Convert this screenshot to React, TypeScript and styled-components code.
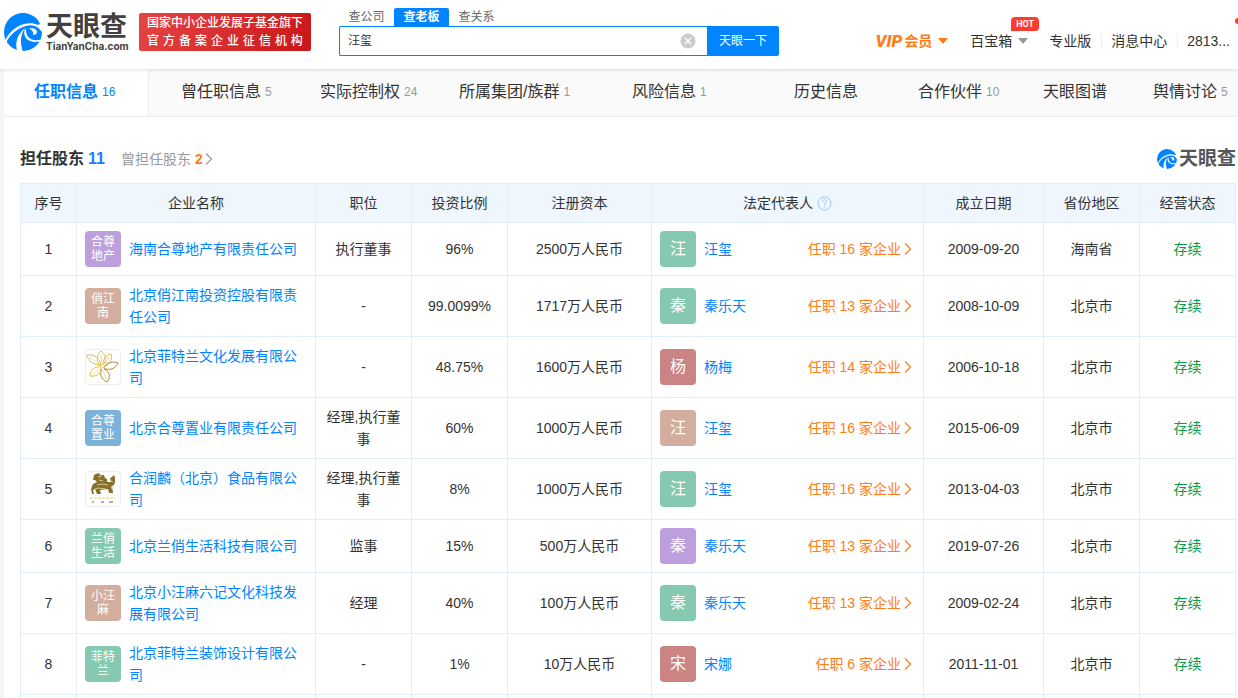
import React from 'react';
import styled, { createGlobalStyle } from 'styled-components';

const Global = createGlobalStyle`
  * { box-sizing: border-box; }
  html { scrollbar-width: none; }
  body {
    margin: 0;
    background: #f5f5f5;
    color: #333;
    font: 14px/22px "Liberation Sans", "Noto Sans CJK SC", sans-serif;
  }
  a { color: inherit; text-decoration: none; }
  button, input { font: inherit; }
`;

const Header = styled.header`
  display: flex;
  align-items: flex-start;
  height: 69px;
  padding-left: 4px;
  background: #fff;
  box-shadow: 0 1px 4px rgba(0, 0, 0, 0.12);
  position: relative;
  z-index: 1;
`;

const Brand = styled.a`
  display: flex;
  gap: 4px;
  width: 124px;
  margin-top: 13px;
`;

const BrandWords = styled.span`
  display: flex;
  flex-direction: column;
  color: #443f40;
  white-space: nowrap;
`;

const BrandName = styled.span<{ $small?: boolean }>`
  font-size: ${p => (p.$small ? 19 : 27)}px;
  line-height: ${p => (p.$small ? 20 : 28)}px;
  font-weight: 700;
  color: ${p => (p.$small ? '#55565c' : '#443f40')};
`;

const BrandDomain = styled.span`
  font: 700 10px/10px Inter, sans-serif;
`;

const Slogan = styled.div`
  width: 172px;
  height: 38px;
  margin: 13px 0 0 11px;
  padding: 1px 8px;
  border-radius: 2px;
  background: linear-gradient(115deg, #e64545, #c91618);
  color: #fff;
  font-size: 12px;
  line-height: 18px;
  font-weight: 500;
  white-space: nowrap;
`;

const SloganLine = styled.div`
  display: flex;
  justify-content: space-between;
`;

const Search = styled.form`
  width: 440px;
  margin: 8px 0 0 28px;
`;

const SearchTabs = styled.div`
  display: flex;
  height: 18px;
`;

const SearchTab = styled.button<{ $active?: boolean }>`
  width: 55px;
  padding: 0;
  border: 0;
  border-radius: 2px 2px 0 0;
  background: ${p => (p.$active ? '#0084ff' : 'transparent')};
  color: ${p => (p.$active ? '#fff' : '#666')};
  font-size: 12px;
  line-height: 18px;
  font-weight: ${p => (p.$active ? 700 : 400)};
`;

const SearchRow = styled.div`
  display: flex;
  height: 30px;
`;

const SearchBox = styled.div`
  flex: 1;
  display: flex;
  align-items: center;
  padding: 0 11px 0 8px;
  border: 1px solid #0084ff;
  border-right: 0;
  border-radius: 2px 0 0 2px;
`;

const SearchInput = styled.input`
  flex: 1;
  min-width: 0;
  padding: 0;
  border: 0;
  outline: 0;
  background: none;
  color: #333;
  font-size: 12px;
`;

const IconButton = styled.button`
  display: flex;
  padding: 0;
  border: 0;
  background: none;
`;

const SearchButton = styled.button`
  width: 72px;
  padding: 0;
  border: 0;
  border-radius: 0 2px 2px 0;
  background: #0084ff;
  color: #fff;
  font-size: 12px;
`;

const UserNav = styled.nav`
  display: flex;
  align-items: center;
  margin: 30px 8px 0 auto;
  white-space: nowrap;
`;

const UserLink = styled.a<{ $vip?: boolean; $menu?: boolean }>`
  display: flex;
  align-items: center;
  gap: 6px;
  position: relative;
  padding: 0 ${p => (p.$menu ? 11 : 10)}px;
  color: ${p => (p.$vip ? '#ff7d18' : '#333')};
  font-weight: ${p => (p.$vip ? 700 : 400)};
  & + &::before {
    content: '';
    position: absolute;
    left: 0;
    top: 4px;
    height: 14px;
    border-left: 1px solid #eee;
  }
  &:last-child { padding-right: 0; }
`;

const VipMark = styled.span`
  font: italic 900 17px/22px Roboto, sans-serif;
  margin-right: -4px;
`;

const Caret = styled.span`
  border: 5px solid transparent;
  border-top: 6px solid currentColor;
  border-bottom: 0;
`;

const GreyCaret = styled(Caret)`
  color: #999;
`;

const Hot = styled.span`
  position: absolute;
  right: 0;
  top: -13px;
  width: 28px;
  height: 14px;
  border-radius: 4px 4px 4px 0;
  background: #ff3b30;
  color: #fff;
  font: 700 9px/14px Roboto, sans-serif;
  text-align: center;
`;

const Dot = styled.span`
  position: absolute;
  right: -11px;
  top: -12px;
  width: 6px;
  height: 6px;
  border-radius: 50%;
  background: #ff3b30;
`;

const Page = styled.main`
  margin-left: 4px;
  background: #fff;
  overflow: hidden;
`;

const TabBar = styled.nav`
  display: grid;
  grid-template-columns: 145fr 139fr 139fr 173fr 162fr 124fr 125fr 110fr 117fr;
  height: 48px;
  border-bottom: 1px solid #eee;
  background: #fafafa;
`;

const Tab = styled.a<{ $active?: boolean }>`
  display: flex;
  align-items: center;
  gap: 4px;
  padding: 0 0 1px ${p => (p.$active ? 30 : 32)}px;
  white-space: nowrap;
  font-size: 16px;
  color: ${p => (p.$active ? '#0084ff' : '#333')};
  font-weight: ${p => (p.$active ? 700 : 400)};
  background: ${p => (p.$active ? '#fff' : 'transparent')};
  border-right: ${p => (p.$active ? '1px solid #eee' : '0')};
`;

const TabCount = styled.span<{ $active?: boolean }>`
  font-size: 12px;
  font-weight: 400;
  color: ${p => (p.$active ? '#0084ff' : '#999')};
`;

const Section = styled.section`
  padding: 31px 2px 0 16px;
`;

const SectionHead = styled.div`
  display: flex;
  align-items: center;
  height: 22px;
  margin-bottom: 13px;
`;

const Title = styled.h2`
  display: flex;
  gap: 4px;
  margin: 0 16px 0 0;
  font-size: 16px;
  line-height: 22px;
  font-weight: 700;
`;

const TitleCount = styled.span`
  color: #1a7dff;
`;

const Former = styled.a`
  display: flex;
  align-items: center;
  color: #999;
`;

const FormerCount = styled.b`
  margin: 0 2px 0 4px;
  color: #ff7d18;
`;

const SmallBrand = styled.div`
  display: flex;
  align-items: center;
  gap: 2px;
  margin-left: auto;
`;

const Table = styled.table`
  width: 100%;
  table-layout: fixed;
  border-collapse: collapse;
`;

const Head = styled.th`
  height: 39px;
  padding: 0;
  border: 1px solid #e1edf7;
  background: #eff6fd;
  font-weight: 400;
`;

const HeadLabel = styled.span`
  display: flex;
  align-items: center;
  justify-content: center;
  gap: 4px;
`;

const Cell = styled.td`
  padding: 8px;
  border: 1px solid #e1edf7;
  text-align: center;
`;

const StatusCell = styled(Cell)`
  color: #0a9a4a;
`;

const Party = styled.div`
  display: flex;
  align-items: center;
  gap: 8px;
  text-align: left;
`;

const Avatar = styled.span<{ $color: string; $person?: boolean }>`
  flex: none;
  display: flex;
  align-items: center;
  justify-content: center;
  width: 36px;
  height: 36px;
  padding: 0 6px;
  border-radius: 4px;
  background: ${p => p.$color};
  color: #fff;
  font-size: ${p => (p.$person ? 16 : 12)}px;
  line-height: ${p => (p.$person ? 22 : 14)}px;
  text-align: center;
`;

const Picture = styled.svg`
  flex: none;
  width: 36px;
  height: 36px;
  border: 1px solid #eee;
  border-radius: 4px;
`;

const NameLink = styled.a`
  color: #0084ff;
`;

const JobsLink = styled.a`
  display: flex;
  align-items: center;
  gap: 3px;
  margin: 0 3px 0 auto;
  color: #ff7d18;
`;

const SwirlSvg = styled.svg`
  flex: none;
`;

const Chevron = () => (
  <svg width="8" height="14" viewBox="0 0 8 14" fill="none" stroke="currentColor" strokeWidth="1.2" aria-hidden="true">
    <path d="M1 1.5 6.5 7 1 12.5" />
  </svg>
);

const Swirl = ({ size }: { size: number }) => (
  <SwirlSvg width={size} height={size} viewBox="0 0 38 38" aria-hidden="true">
    <circle cx="19" cy="19" r="19" fill="#0084ff" />
    <g fill="#fff">
      <path d="M1 28C5 19 12 13 20 11c6-1.500 10-1 14 1L37 10l2 2v7l-2-1c-3-5-9-7-15-5C14 15 6 21 2 30Z" />
      <path d="M13 38c-2-9 0-16 8-23-5 8-5 15-2 24Z" />
      <path d="M22 16C21.500 24 27 29 37 26.500L36 28.500c-11 2-17-3-15.500-11.500Z" />
      <path d="M25 15.500c4-1 8 .5 8 3.500 0 2-2 3-4 3 1-3-1-5-4-6.500Z" />
    </g>
  </SwirlSvg>
);

const Flower = () => (
  <Picture viewBox="0 0 34 34" fill="none" stroke="#dfc04c" strokeWidth="1" role="img" aria-label="logo">
    <path d="M15 16C9 11 11 4 15 1c5 4 6 9 2 14" />
    <path d="M14 15C6 15 1 9 1 5c7-1 13 3 14 10" />
    <path d="M17 14c0-5 3-9 8-10 2 5-1 9-6 12" />
    <path d="M18 17c4-5 9-6 14-4-3 6-9 8-14 5" stroke="#b5883c" />
    <path d="M18 19c6 3 7 8 3 13-6-3-8-8-5-13" stroke="#b5883c" />
    <path d="M15 18c0 6-5 9-11 8 0-6 5-10 11-9" />
    <path d="M14 16C10 12 6 9 3 7M16 14 15 4M19 14l4-7M17 21l3 8M14 19l-8 6M14 13l3 5 5-3-3-3-3 5 5 2" strokeWidth="0.5" />
  </Picture>
);

const Beast = () => (
  <Picture viewBox="0 0 34 34" fill="#85702e" role="img" aria-label="logo">
    <path d="m10 2 3-1 1 2h4l1 3 2 1 0 3h4l-1-4 2-1 2-2 1 2v5l-1 3-2 1 1 7h-4l-1-4-8 1 1 4h-4l-2-5-2 1 1 4H6l-1-5 2-5 4-2-2-2h-2l1-5Z" />
    <path d="m12 5 4-1m-3 4 4 1m-6 4 6-1 5 1m-10 3 8 1m5-8 2 1m-2 4 1 3m-17 0 3-1" fill="none" stroke="#d8c783" strokeWidth="1" />
    <path d="M4 26h25" stroke="#ece6c0" strokeWidth="2" strokeDasharray="3 1" />
    <path d="M6 30h2m7 0h3m5 0h4" stroke="#d8a0a4" strokeWidth="2" />
  </Picture>
);

const GREEN = '#85cab0';
const BROWN = '#d3ae9e';
const RED = '#cb8383';
const PURPLE = '#bc9fdc';
const BLUE = '#7cb2d9';

const tabs: [string, string][] = [
  ['任职信息', '16'], ['曾任职信息', '5'], ['实际控制权', '24'], ['所属集团/族群', '1'],
  ['风险信息', '1'], ['历史信息', ''], ['合作伙伴', '10'], ['天眼图谱', ''], ['舆情讨论', '5'],
];

const columns: [string, number][] = [
  ['序号', 56], ['企业名称', 239], ['职位', 96], ['投资比例', 96], ['注册资本', 144],
  ['法定代表人', 272], ['成立日期', 120], ['省份地区', 96], ['经营状态', 96],
];

interface Company {
  name: string;
  logo: React.ReactNode;
  job: string;
  share: string;
  capital: string;
  person: string;
  color: string;
  jobs: number;
  date: string;
  area: string;
}

const companies: Company[] = [
  { name: '海南合尊地产有限责任公司', logo: <Avatar $color={PURPLE}>合尊地产</Avatar>, job: '执行董事', share: '96%', capital: '2500万人民币', person: '汪玺', color: GREEN, jobs: 16, date: '2009-09-20', area: '海南省' },
  { name: '北京俏江南投资控股有限责任公司', logo: <Avatar $color={BROWN}>俏江南</Avatar>, job: '-', share: '99.0099%', capital: '1717万人民币', person: '秦乐天', color: GREEN, jobs: 13, date: '2008-10-09', area: '北京市' },
  { name: '北京菲特兰文化发展有限公司', logo: <Flower />, job: '-', share: '48.75%', capital: '1600万人民币', person: '杨梅', color: RED, jobs: 14, date: '2006-10-18', area: '北京市' },
  { name: '北京合尊置业有限责任公司', logo: <Avatar $color={BLUE}>合尊置业</Avatar>, job: '经理,执行董事', share: '60%', capital: '1000万人民币', person: '汪玺', color: BROWN, jobs: 16, date: '2015-06-09', area: '北京市' },
  { name: '合润麟（北京）食品有限公司', logo: <Beast />, job: '经理,执行董事', share: '8%', capital: '1000万人民币', person: '汪玺', color: GREEN, jobs: 16, date: '2013-04-03', area: '北京市' },
  { name: '北京兰俏生活科技有限公司', logo: <Avatar $color={GREEN}>兰俏生活</Avatar>, job: '监事', share: '15%', capital: '500万人民币', person: '秦乐天', color: PURPLE, jobs: 13, date: '2019-07-26', area: '北京市' },
  { name: '北京小汪麻六记文化科技发展有限公司', logo: <Avatar $color={BROWN}>小汪麻</Avatar>, job: '经理', share: '40%', capital: '100万人民币', person: '秦乐天', color: GREEN, jobs: 13, date: '2009-02-24', area: '北京市' },
  { name: '北京菲特兰装饰设计有限公司', logo: <Avatar $color={GREEN}>菲特兰</Avatar>, job: '-', share: '1%', capital: '10万人民币', person: '宋娜', color: RED, jobs: 6, date: '2011-11-01', area: '北京市' },
];

export default function App() {
  return (
    <>
      <Global />
      <Header>
        <Brand href="#">
          <Swirl size={38} />
          <BrandWords>
            <BrandName>天眼查</BrandName>
            <BrandDomain>TianYanCha.com</BrandDomain>
          </BrandWords>
        </Brand>
        <Slogan>
          <SloganLine>国家中小企业发展子基金旗下</SloganLine>
          <SloganLine>{[...'官方备案企业征信机构'].map(c => <span key={c}>{c}</span>)}</SloganLine>
        </Slogan>
        <Search onSubmit={e => e.preventDefault()}>
          <SearchTabs>
            <SearchTab type="button">查公司</SearchTab>
            <SearchTab type="button" $active>查老板</SearchTab>
            <SearchTab type="button">查关系</SearchTab>
          </SearchTabs>
          <SearchRow>
            <SearchBox>
              <SearchInput aria-label="搜索" defaultValue="汪玺" />
              <IconButton type="reset" aria-label="清除">
                <svg width="16" height="16" viewBox="0 0 16 16">
                  <circle cx="8" cy="8" r="7.500" fill="#ccc" />
                  <path d="m5 5 6 6m0-6-6 6" stroke="#fff" strokeWidth="1.500" />
                </svg>
              </IconButton>
            </SearchBox>
            <SearchButton type="submit">天眼一下</SearchButton>
          </SearchRow>
        </Search>
        <UserNav>
          <UserLink href="#" $vip $menu><VipMark>VIP</VipMark>会员<Caret /></UserLink>
          <UserLink href="#" $menu>百宝箱<GreyCaret /><Hot>HOT</Hot></UserLink>
          <UserLink href="#">专业版</UserLink>
          <UserLink href="#">消息中心</UserLink>
          <UserLink href="#">2813...<Dot /></UserLink>
        </UserNav>
      </Header>
      <Page>
        <TabBar>
          {tabs.map(([label, count], i) => (
            <Tab key={label} href="#" $active={i === 0}>
              {label}
              {count && <TabCount $active={i === 0}>{count}</TabCount>}
            </Tab>
          ))}
        </TabBar>
        <Section>
          <SectionHead>
            <Title>担任股东<TitleCount>11</TitleCount></Title>
            <Former href="#">曾担任股东<FormerCount>2</FormerCount><Chevron /></Former>
            <SmallBrand><Swirl size={20} /><BrandName $small>天眼查</BrandName></SmallBrand>
          </SectionHead>
          <Table>
            <colgroup>
              {columns.map(([label, width]) => <col key={label} style={{ width: `${(width / 1215) * 100}%` }} />)}
            </colgroup>
            <thead>
              <tr>
                {columns.map(([label]) => (
                  <Head key={label} scope="col">
                    <HeadLabel>
                      {label}
                      {label === '法定代表人' && (
                        <svg width="15" height="15" viewBox="0 0 15 15" fill="none" stroke="#9cc8ef" aria-hidden="true">
                          <circle cx="7.500" cy="7.500" r="6.500" />
                          <path d="M5.500 6c0-3 4-3 4-.5 0 1.500-2 1.500-2 3.500M7.500 10v1.500" />
                        </svg>
                      )}
                    </HeadLabel>
                  </Head>
                ))}
              </tr>
            </thead>
            <tbody>
              {companies.map((c, i) => (
                <tr key={c.name}>
                  <Cell>{i + 1}</Cell>
                  <Cell><Party>{c.logo}<NameLink href="#">{c.name}</NameLink></Party></Cell>
                  <Cell>{c.job}</Cell>
                  <Cell>{c.share}</Cell>
                  <Cell>{c.capital}</Cell>
                  <Cell>
                    <Party>
                      <Avatar $color={c.color} $person>{c.person[0]}</Avatar>
                      <NameLink href="#">{c.person}</NameLink>
                      <JobsLink href="#">任职 {c.jobs} 家企业<Chevron /></JobsLink>
                    </Party>
                  </Cell>
                  <Cell>{c.date}</Cell>
                  <Cell>{c.area}</Cell>
                  <StatusCell>存续</StatusCell>
                </tr>
              ))}
              <tr>{columns.map(([label]) => <Cell key={label} />)}</tr>
            </tbody>
          </Table>
        </Section>
      </Page>
    </>
  );
}
